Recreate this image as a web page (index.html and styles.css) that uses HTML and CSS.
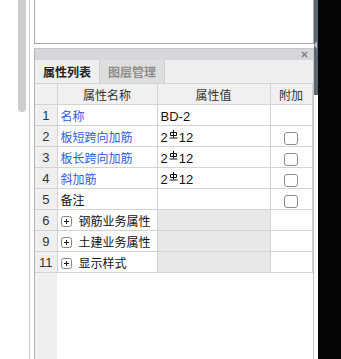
FILE: index.html
```
<!DOCTYPE html>
<html>
	<head>
		<meta charset="utf-8" />
		<title>属性列表</title>
		<link rel="stylesheet" href="styles.css">
	</head>
	<body>
		<div class="screen">
			<div class="gutter">
				<div class="thumb"></div>
				<div class="rule"></div>
			</div>
			<div class="main">
				<div class="topbox"></div>
				<div class="panel">
					<div class="panel-head">
						<svg class="close" width="7" height="7" viewBox="0 0 7 7"><path d="M1 1L6 6M6 1L1 6" stroke="#7c7c7c" stroke-width="1.4"/></svg>
					</div>
					<div class="tabs">
						<div class="tab active">属性列表</div>
						<div class="tab">图层管理</div>
					</div>
					<div class="grid-wrap">
						<table class="props">
							<colgroup>
								<col class="c-num"><col class="c-name"><col class="c-val"><col class="c-add">
							</colgroup>
							<tr class="head">
								<td class="num"></td>
								<td class="center">属性名称</td>
								<td class="center">属性值</td>
								<td class="center">附加</td>
							</tr>
							<tr>
								<td class="num">1</td>
								<td class="name link">名称</td>
								<td class="val"><span class="lat">BD-2</span></td>
								<td class="add"></td>
							</tr>
							<tr>
								<td class="num">2</td>
								<td class="name link">板短跨向加筋</td>
								<td class="val"><span class="lat">2</span><svg class="bar" width="9" height="9" viewBox="0 0 9 9"><path d="M4.5 0V7.5M1.5 2.5H7.5V5.5H1.5ZM0.5 8H8.5" stroke="#111" stroke-width="1" fill="none"/></svg><span class="lat">12</span></td>
								<td class="add"><span class="check"></span></td>
							</tr>
							<tr>
								<td class="num">3</td>
								<td class="name link">板长跨向加筋</td>
								<td class="val"><span class="lat">2</span><svg class="bar" width="9" height="9" viewBox="0 0 9 9"><path d="M4.5 0V7.5M1.5 2.5H7.5V5.5H1.5ZM0.5 8H8.5" stroke="#111" stroke-width="1" fill="none"/></svg><span class="lat">12</span></td>
								<td class="add"><span class="check"></span></td>
							</tr>
							<tr>
								<td class="num">4</td>
								<td class="name link">斜加筋</td>
								<td class="val"><span class="lat">2</span><svg class="bar" width="9" height="9" viewBox="0 0 9 9"><path d="M4.5 0V7.5M1.5 2.5H7.5V5.5H1.5ZM0.5 8H8.5" stroke="#111" stroke-width="1" fill="none"/></svg><span class="lat">12</span></td>
								<td class="add"><span class="check"></span></td>
							</tr>
							<tr>
								<td class="num">5</td>
								<td class="name">备注</td>
								<td class="val"></td>
								<td class="add"><span class="check"></span></td>
							</tr>
							<tr class="group">
								<td class="num">6</td>
								<td class="name"><svg class="plus" width="11" height="11" viewBox="0 0 11 11"><rect x="0.5" y="0.5" width="10" height="10" rx="2" fill="#fff" stroke="#858585"/><path d="M3 5.5H8M5.5 3V8" stroke="#1a1a1a"/></svg>钢筋业务属性</td>
								<td class="val"></td>
								<td class="add"></td>
							</tr>
							<tr class="group">
								<td class="num">9</td>
								<td class="name"><svg class="plus" width="11" height="11" viewBox="0 0 11 11"><rect x="0.5" y="0.5" width="10" height="10" rx="2" fill="#fff" stroke="#858585"/><path d="M3 5.5H8M5.5 3V8" stroke="#1a1a1a"/></svg>土建业务属性</td>
								<td class="val"></td>
								<td class="add"></td>
							</tr>
							<tr class="group">
								<td class="num">11</td>
								<td class="name"><svg class="plus" width="11" height="11" viewBox="0 0 11 11"><rect x="0.5" y="0.5" width="10" height="10" rx="2" fill="#fff" stroke="#858585"/><path d="M3 5.5H8M5.5 3V8" stroke="#1a1a1a"/></svg>显示样式</td>
								<td class="val"></td>
								<td class="add"></td>
							</tr>
						</table>
					</div>
				</div>
			</div>
			<div class="splitter">
				<div class="splitter-bar"><span class="notch"></span></div>
			</div>
			<div class="edge"></div>
		</div>
	</body>
</html>
```

FILE: styles.css
```
html, body {
	margin: 0;
	padding: 0;
	background: #fff;
}
body {
	width: 341px;
	height: 359px;
	overflow: hidden;
	font-family: "Noto Sans CJK SC", "Liberation Sans", sans-serif;
	font-size: 12px;
	color: #111;
}
.screen {
	display: flex;
	height: 359px;
}
.gutter {
	display: flex;
	width: 34px;
	flex: none;
}
.thumb {
	margin-left: 18px;
	width: 8px;
	height: 112px;
	background-color: #cdcdcd;
	border-radius: 0 0 4px 4px;
}
.rule {
	margin-left: 3px;
	width: 1px;
	background-color: #c9c9c9;
}
.main {
	display: flex;
	flex-direction: column;
	width: 280px;
	flex: none;
}
.topbox {
	height: 43px;
	border: 1px solid #acacac;
	border-top: none;
	flex: none;
}
.panel {
	display: flex;
	flex-direction: column;
	flex: 1;
	margin-top: 4px;
	border-left: 1px solid #b4b4b4;
	border-right: 1px solid #c4c4c4;
}
.panel-head {
	display: flex;
	justify-content: flex-end;
	align-items: center;
	height: 11px;
	padding-right: 5px;
	background-color: #d6d7db;
	border-top: 1px solid #c6c7cb;
}
.tabs {
	display: flex;
	height: 23px;
	background-color: #efefef;
}
.tab {
	width: 64px;
	line-height: 23px;
	text-align: center;
	font-weight: bold;
	color: #8d8d8d;
	background-color: #dedede;
	border-right: 1px solid #cfcfcf;
}
.tab.active {
	color: #222;
	background-color: #efefef;
}
.grid-wrap {
	flex: 1;
	background: linear-gradient(to right, #efefef 22px, #fff 22px);
}
.props {
	width: 277px;
	border-collapse: collapse;
	table-layout: fixed;
	background-color: #fff;
}
.c-num { width: 22px; }
.c-name { width: 100px; }
.c-val { width: 113px; }
.c-add { width: 42px; }
.props td {
	height: 20px;
	padding: 0;
	border: 1px solid #d3d3d3;
	white-space: nowrap;
	overflow: hidden;
}
.props td:first-child {
	border-left: none;
}
.props tr:first-child td {
	border-top: 1px solid #d3d3d3;
}
.head td {
	background-color: #f0f0f0;
	color: #333;
}
.center {
	text-align: center;
}
.num {
	background-color: #efefef;
	text-align: center;
	color: #333;
	font-family: "Liberation Sans", sans-serif;
	font-size: 13px;
}
.name {
	padding-left: 3px !important;
}
.link {
	color: #2d5ee0;
}
.val {
	padding-left: 3px !important;
}
.lat {
	font-family: "Liberation Sans", sans-serif;
	font-size: 13px;
}
.bar {
	vertical-align: 3px;
	margin: 0 1px;
}
.add {
	text-align: center;
}
.check {
	display: inline-block;
	width: 12px;
	height: 11px;
	border: 1px solid #8c8c8c;
	border-radius: 3px;
	vertical-align: middle;
	background-color: #fff;
}
.group .val {
	background-color: #e8e8e8;
}
.plus {
	vertical-align: -1px;
	margin-right: 7px;
}
.splitter {
	width: 4px;
	flex: none;
}
.splitter-bar {
	height: 95px;
	background-color: #5d6771;
	padding-top: 41px;
	box-sizing: border-box;
}
.notch {
	display: block;
	width: 0;
	height: 0;
	border-top: 4px solid transparent;
	border-bottom: 4px solid transparent;
	border-right: 3px solid #b9c0c7;
}
.edge {
	flex: 1;
	background-color: #050505;
}
```
